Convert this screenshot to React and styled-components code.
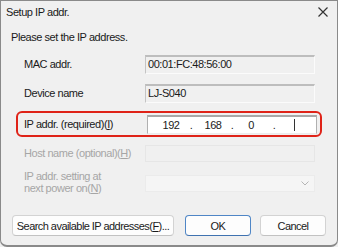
import React from "react";
import styled, { createGlobalStyle } from "styled-components";

const GlobalStyle = createGlobalStyle`
  html, body {
    margin: 0;
    padding: 0;
    background: #f0f0f0;
  }
  body {
    font-family: "Liberation Sans", Arial, sans-serif;
  }
`;

const Window = styled.div`
  box-sizing: border-box;
  width: 338px;
  height: 247px;
  border: 1px solid #8a8a8a;
  border-bottom-width: 2px;
  border-radius: 0 0 7px 7px;
  background: #f0f0f0;
  display: flex;
  flex-direction: column;
  font-size: 11px;
  letter-spacing: -0.45px;
  color: #1a1a1a;
  white-space: nowrap;
`;

const TitleBar = styled.div`
  height: 21px;
  display: flex;
  align-items: center;
  justify-content: space-between;
  padding: 0 8px 0 5px;
`;

const Title = styled.span`
  color: #1a1a1a;
`;

const Close = styled.svg`
  width: 12px;
  height: 12px;
`;

const Intro = styled.div`
  margin: 8px 0 0 10px;
  line-height: 14px;
`;

const Row = styled.div`
  display: flex;
  align-items: ${({ $top }) => ($top ? "flex-start" : "center")};
  margin: ${({ $mt }) => $mt}px 0 0 23px;
`;

const Label = styled.div`
  width: ${({ $w }) => $w || 121}px;
  flex-shrink: 0;
  line-height: ${({ $lh }) => $lh || 15}px;
  color: ${({ $disabled }) => ($disabled ? "#a6a6a6" : "#1a1a1a")};
`;

const Key = styled.span`
  text-decoration: underline;
`;

const ReadField = styled.div`
  box-sizing: border-box;
  width: 170px;
  height: 19px;
  padding: 1px 2px;
  background: #f0f0f0;
  border: 1px solid;
  border-top-width: 2px;
  border-color: #bdbdbd #fbfbfb #fbfbfb #c4c4c4;
  line-height: 13px;
`;

const HiBox = styled.div`
  box-sizing: border-box;
  width: 306px;
  height: 26px;
  margin: 8px 0 0 15px;
  border: 2px solid #df2318;
  border-radius: 6px;
  display: flex;
  align-items: center;
  padding-left: 6px;
`;

const IpField = styled.div`
  box-sizing: border-box;
  width: 170px;
  height: 19px;
  background: #ffffff;
  border: 1px solid #b0b0b0;
  border-top: 2px solid #a8a8a8;
  border-bottom-color: #ececec;
  display: grid;
  grid-template-columns: 20px 20px 24px 14px 24px 22px 1fr;
  align-items: center;
  padding-left: 13px;
`;

const Octet = styled.span`
  text-align: center;
`;

const Caret = styled.span`
  width: 1px;
  height: 12px;
  background: #333;
  margin-left: 9px;
`;

const DisabledField = styled.div`
  box-sizing: border-box;
  width: 170px;
  height: 17px;
  background: #f0f0f0;
  border: 1px solid #e6e6e6;
`;

const Select = styled.div`
  box-sizing: border-box;
  width: 170px;
  height: 17px;
  margin-top: 5px;
  background: #f5f5f5;
  border: 1px solid #ebebeb;
  display: flex;
  align-items: center;
  justify-content: flex-end;
  padding-right: 5px;
`;

const Footer = styled.div`
  display: flex;
  margin: 21px 0 0 11px;
`;

const Button = styled.button`
  box-sizing: border-box;
  width: ${({ $w }) => $w}px;
  height: 21px;
  margin-right: ${({ $mr }) => $mr || 0}px;
  background: #fdfdfd;
  border: 1px solid ${({ $primary }) => ($primary ? "#4f86c6" : "#d3d3d3")};
  border-bottom-color: ${({ $primary }) => ($primary ? "#3f72b0" : "#c2c2c2")};
  border-radius: 4px;
  font-family: "Liberation Sans", Arial, sans-serif;
  font-size: 11px;
  letter-spacing: -0.55px;
  color: #1a1a1a;
  padding: 0;
  white-space: nowrap;
`;

export default function App() {
  return (
    <>
      <GlobalStyle />
      <Window>
        <TitleBar>
          <Title>Setup IP addr.</Title>
          <Close viewBox="0 0 12 12">
            <path d="M1.5 1.5L10.5 10.5M10.5 1.5L1.5 10.5" stroke="#333" strokeWidth="1.2" fill="none" />
          </Close>
        </TitleBar>
        <Intro>Please set the IP address.</Intro>
        <Row $mt={11}>
          <Label>MAC addr.</Label>
          <ReadField>00:01:FC:48:56:00</ReadField>
        </Row>
        <Row $mt={10}>
          <Label>Device name</Label>
          <ReadField>LJ-S040</ReadField>
        </Row>
        <HiBox>
          <Label $w={123}>
            IP addr. (required)(<Key>I</Key>)
          </Label>
          <IpField>
            <Octet>192</Octet>
            <Octet>.</Octet>
            <Octet>168</Octet>
            <Octet>.</Octet>
            <Octet>0</Octet>
            <Octet>.</Octet>
            <Caret />
          </IpField>
        </HiBox>
        <Row $mt={8}>
          <Label $disabled>
            Host name (optional)(<Key>H</Key>)
          </Label>
          <DisabledField />
        </Row>
        <Row $mt={8} $top>
          <Label $disabled $lh={12}>
            IP addr. setting at
            <br />
            next power on(<Key>N</Key>)
          </Label>
          <Select>
            <svg width="8" height="5" viewBox="0 0 8 5">
              <path d="M0.5 0.5L4 4L7.5 0.5" stroke="#b5b5b5" strokeWidth="1" fill="none" />
            </svg>
          </Select>
        </Row>
        <Footer>
          <Button $w={162} $mr={11}>
            Search available IP addresses(<Key>F</Key>)...
          </Button>
          <Button $w={66} $mr={9} $primary>
            OK
          </Button>
          <Button $w={66}>Cancel</Button>
        </Footer>
      </Window>
    </>
  );
}
